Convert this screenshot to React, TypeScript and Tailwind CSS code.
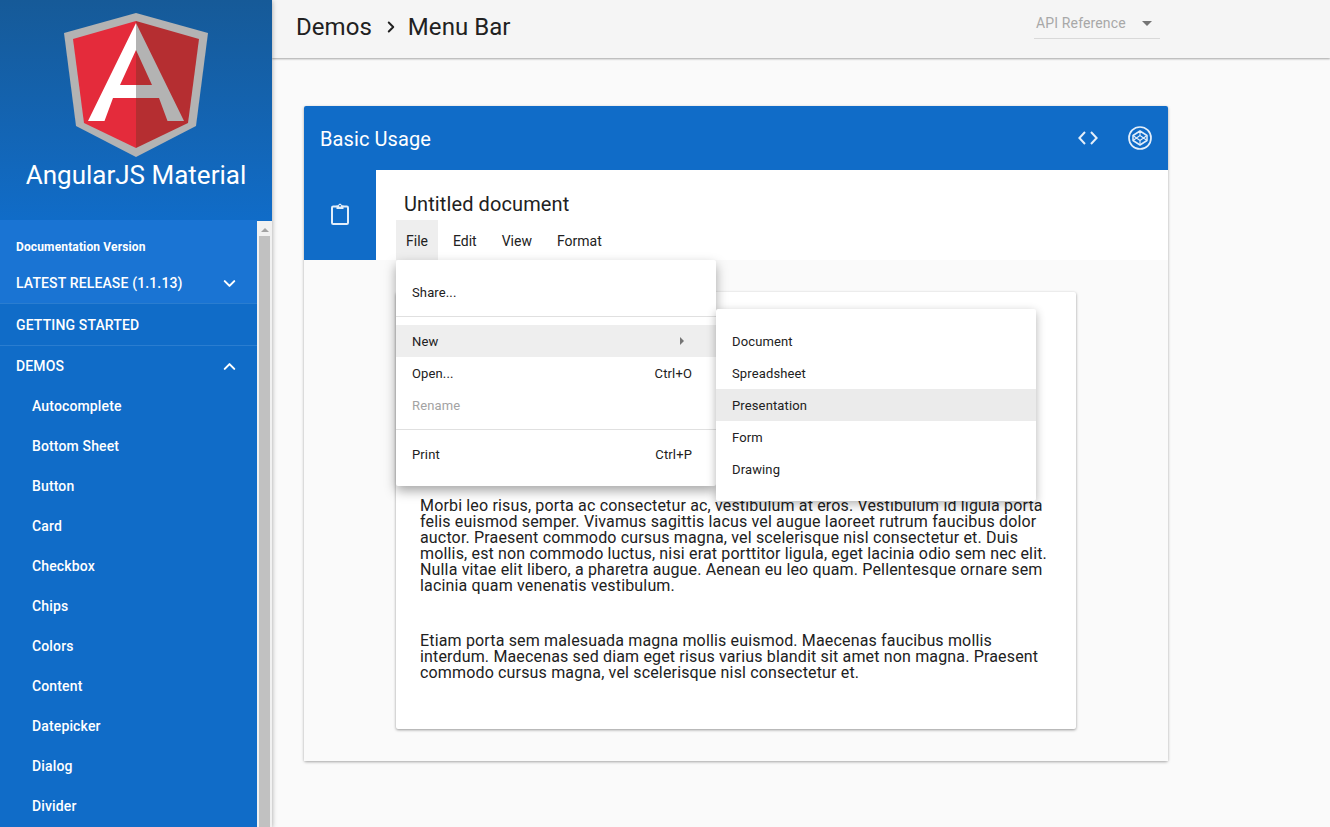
import React from 'react';
import { ChevronDown, ChevronUp, ChevronRight } from 'lucide-react';

const demoLinks = ['Autocomplete', 'Bottom Sheet', 'Button', 'Card', 'Checkbox', 'Chips', 'Colors', 'Content', 'Datepicker', 'Dialog', 'Divider'];
const submenuItems = ['Document', 'Spreadsheet', 'Presentation', 'Form', 'Drawing'];

function AngularLogo() {
    return (
        <svg width="144" height="146" viewBox="64 12 144 146" className="block">
            <polygon points="136,13 208,33 196,126 136,157 76,126 64,33" fill="#b3b3b3" />
            <polygon points="136,21 136,148 84,123 73,39" fill="#e42b3b" />
            <polygon points="136,21 199,39 188,123 136,148" fill="#b52e31" />
            <polygon points="136,23 88,121 104.5,121 113,98 136,98 136,85 120,85 136,50" fill="#ffffff" />
            <polygon points="136,23 184,121 167.5,121 159,98 136,98 136,85 152,85 136,50" fill="#b3b3b3" />
        </svg>
    );
}

function CodeIcon() {
    return (
        <svg width="20" height="14" viewBox="0 0 20 14" fill="none" stroke="#e3eefa" strokeWidth="2" className="block">
            <path d="M7 1 1.4 7 7 13" />
            <path d="M13 1 18.6 7 13 13" />
        </svg>
    );
}

function CodepenIcon() {
    return (
        <svg width="24" height="24" viewBox="0 0 24 24" fill="none" stroke="#e3eefa" className="block">
            <circle cx="12" cy="12" r="11" strokeWidth="1.7" />
            <path d="M12 5 19 9.5V14.5L12 19 5 14.5V9.5Z" strokeWidth="1.5" strokeLinejoin="round" />
            <path d="M12 9.5 15.5 12 12 14.5 8.5 12ZM12 5V9.5M12 14.5V19M5 9.5 8.5 12 5 14.5M19 9.5 15.5 12 19 14.5" strokeWidth="1.1" />
        </svg>
    );
}

function ClipboardIcon() {
    return (
        <svg width="18" height="22" viewBox="0 0 18 22" fill="none" className="block">
            <rect x="1" y="3.5" width="16" height="17.5" rx="1.2" stroke="#e3eefa" strokeWidth="2" />
            <path d="M5.5 2.5H7.2C7.4 1.4 8.1.8 9 .8S10.6 1.4 10.8 2.5H12.5V6H5.5Z" fill="#e3eefa" />
            <rect x="8.2" y="2" width="1.6" height="1.6" fill="#106cc8" />
        </svg>
    );
}

function Sidebar() {
    return (
        <aside className="relative z-20 flex h-full w-[272px] shrink-0 flex-col bg-[#106cc8] shadow-[0_1px_5px_rgba(0,0,0,0.35)]">
            <div className="flex h-[220px] shrink-0 flex-col items-center bg-gradient-to-b from-[#165a98] to-[#106cc8] pt-[12px]">
                <AngularLogo />
                <div className="mt-[1px] text-[26px] leading-[32px] text-white">AngularJS Material</div>
            </div>
            <div className="flex min-h-0 flex-1">
                <nav className="min-w-0 flex-1 overflow-hidden text-[14px] font-medium tracking-[0.01em] text-white">
                    <div className="border-b border-[#2a7dd0] bg-[#1a74d3]">
                        <div className="pl-4 pt-[20px] text-[12px] font-bold leading-[14px]">Documentation Version</div>
                        <div className="flex h-[49px] items-center justify-between pl-4 pr-[18px] pt-[9px]">
                            <span>LATEST RELEASE (1.1.13)</span>
                            <ChevronDown size={19} strokeWidth={2.6} />
                        </div>
                    </div>
                    <div className="flex h-[42px] items-center border-b border-[#2a7dd0] pl-4 pt-[2px]">GETTING STARTED</div>
                    <div className="flex h-[40px] items-center justify-between pl-4 pr-[18px]">
                        <span>DEMOS</span>
                        <ChevronUp size={19} strokeWidth={2.6} />
                    </div>
                    {demoLinks.map((link) => (
                        <div key={link} className="flex h-[40px] shrink-0 items-center pl-8">
                            {link}
                        </div>
                    ))}
                </nav>
                <div className="mt-px flex w-[15px] shrink-0 flex-col items-center bg-[#f1f1f1]">
                    <div className="flex h-[15px] w-full shrink-0 items-center justify-center pt-[2px]">
                        <div className="h-0 w-0 border-x-[4px] border-b-[4px] border-x-transparent border-b-[#a3a3a3]" />
                    </div>
                    <div className="w-[11px] flex-1 bg-[#c1c1c1]" />
                </div>
            </div>
        </aside>
    );
}

function FileMenu() {
    return (
        <div className="absolute left-[92px] top-[154px] z-10 w-[320px] rounded-[2px] bg-white py-4 text-[13px] tracking-[0.01em] text-[#212121] shadow-[0_5px_12px_rgba(0,0,0,0.35)]">
            <div className="flex h-8 items-center px-4 pt-[2px]">Share...</div>
            <div className="my-2 h-px bg-[#e0e0e0]" />
            <div className="flex h-8 items-center justify-between bg-[#eeeeee] pl-4 pr-8 pt-[2px]">
                <span>New</span>
                <div className="mb-[2px] h-0 w-0 border-y-[4px] border-l-[4px] border-y-transparent border-l-[#757575]" />
            </div>
            <div className="flex h-8 items-center justify-between pl-4 pr-6 pt-[2px]">
                <span>Open...</span>
                <span>Ctrl+O</span>
            </div>
            <div className="flex h-8 items-center px-4 pt-[2px] text-[#a3a3a3]">Rename</div>
            <div className="my-2 h-px bg-[#e0e0e0]" />
            <div className="flex h-8 items-center justify-between pl-4 pr-6 pt-[2px]">
                <span>Print</span>
                <span>Ctrl+P</span>
            </div>
        </div>
    );
}

function NewSubmenu() {
    return (
        <div className="absolute left-[412px] top-[203px] z-10 w-[320px] rounded-[2px] bg-white py-4 text-[13px] tracking-[0.01em] text-[#212121] shadow-[0_3px_10px_rgba(0,0,0,0.3)]">
            {submenuItems.map((item) => (
                <div key={item} className={`flex h-8 items-center px-4 pt-[2px] ${item === 'Presentation' ? 'bg-[#ebebeb]' : ''}`}>
                    {item}
                </div>
            ))}
        </div>
    );
}

function DemoCard() {
    return (
        <section className="relative w-[864px] rounded-[2px] shadow-[0_1px_3px_rgba(0,0,0,0.35)]">
            <header className="flex h-16 items-center justify-between rounded-t-[2px] bg-[#106cc8] pl-4 pr-4 text-white">
                <h2 className="pt-[2px] text-[20px] leading-6 tracking-[0.1px]">Basic Usage</h2>
                <div className="flex items-center gap-[30px]">
                    <CodeIcon />
                    <CodepenIcon />
                </div>
            </header>
            <div className="flex h-[90px]">
                <div className="flex w-[72px] shrink-0 items-center justify-center bg-[#106cc8] pb-[3px]">
                    <ClipboardIcon />
                </div>
                <div className="flex-1 bg-white pl-5">
                    <h3 className="pl-2 pt-[21px] text-[20px] leading-[26px] tracking-[0.1px] text-[#212121]">Untitled document</h3>
                    <div className="mt-[3px] flex h-10 gap-[5px] text-[14px] text-[#212121]">
                        <div className="flex items-center bg-[#eeeeee] px-[10px] pt-[2px]">File</div>
                        <div className="flex items-center px-[10px] pt-[2px]">Edit</div>
                        <div className="flex items-center px-[10px] pt-[2px]">View</div>
                        <div className="flex items-center px-[10px] pt-[2px]">Format</div>
                    </div>
                </div>
            </div>
            <div className="h-[501px] bg-[#fafafa] pl-[92px] pt-8">
                <article className="h-[437px] w-[680px] rounded-[2px] bg-white px-6 pt-[206px] text-[16px] leading-4 tracking-[0.01em] text-[#212121] shadow-[0_1px_3px_rgba(0,0,0,0.4)]">
                    <p>
                        Morbi leo risus, porta ac consectetur ac, vestibulum at eros. Vestibulum id ligula porta felis euismod semper. Vivamus sagittis lacus vel augue laoreet rutrum faucibus dolor auctor. Praesent commodo cursus magna, vel scelerisque nisl consectetur et. Duis mollis, est non commodo luctus, nisi erat porttitor ligula, eget lacinia odio sem nec elit. Nulla vitae elit libero, a pharetra augue. Aenean eu leo quam. Pellentesque ornare sem lacinia quam venenatis vestibulum.
                    </p>
                    <p className="mt-[39px]">
                        Etiam porta sem malesuada magna mollis euismod. Maecenas faucibus mollis interdum. Maecenas sed diam eget risus varius blandit sit amet non magna. Praesent commodo cursus magna, vel scelerisque nisl consectetur et.
                    </p>
                </article>
            </div>
            <FileMenu />
            <NewSubmenu />
        </section>
    );
}

export default function App() {
    return (
        <div className="flex h-screen overflow-hidden bg-[#fafafa] font-['Roboto',sans-serif]">
            <Sidebar />
            <div className="flex min-w-0 flex-1 flex-col">
                <div className="flex h-[58px] shrink-0 items-center justify-between bg-[#f5f5f5] pl-6 pr-[170px] shadow-[0_1px_2px_rgba(0,0,0,0.35)]">
                    <div className="flex items-center pb-[4px] text-[24px] leading-8 tracking-[0.05px] text-[#212121]">
                        <span>Demos</span>
                        <ChevronRight size={18} strokeWidth={2.6} className="ml-[10px] mr-[8px]" />
                        <span>Menu Bar</span>
                    </div>
                    <div className="mb-[10px] flex h-[30px] w-[126px] items-center justify-between border-b border-[#d9d9d9] pl-[2px] pr-[8px] text-[14px] tracking-[0.01em] text-[#a8a8a8]">
                        <span>API Reference</span>
                        <div className="h-0 w-0 border-x-[5px] border-t-[5px] border-x-transparent border-t-[#757575]" />
                    </div>
                </div>
                <main className="pl-8 pt-[48px]">
                    <DemoCard />
                </main>
            </div>
        </div>
    );
}
